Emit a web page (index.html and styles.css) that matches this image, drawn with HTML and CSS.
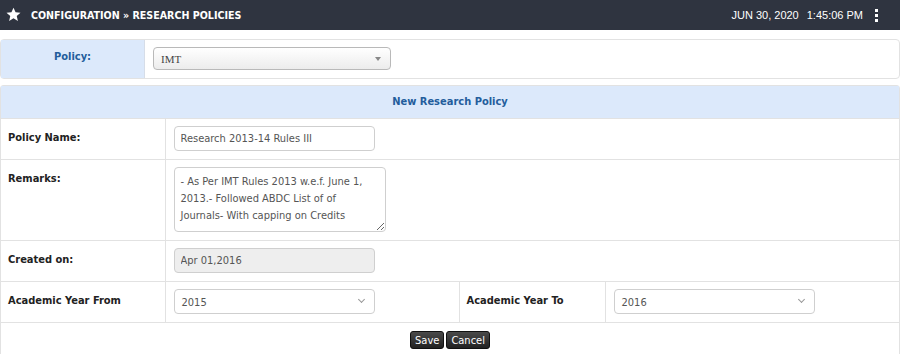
FILE: index.html
```html
<!DOCTYPE html>
<html lang="en">
<head>
    <meta charset="UTF-8">
    <title>Configuration - Research Policies</title>
    <link rel="stylesheet" href="styles.css">
</head>
<body>
    <header class="topbar">
        <div class="crumbs">
            <svg class="star" viewBox="0 0 24 24" width="15" height="15"><path d="M12 1l3.3 7.3 7.9.8-6 5.3 1.8 7.8L12 18.1l-7 4.1 1.8-7.8-6-5.3 7.9-.8z" fill="#fff"/></svg>
            <span class="title">CONFIGURATION &raquo; RESEARCH POLICIES</span>
        </div>
        <div class="clock">
            <span>JUN 30, 2020</span>
            <span>1:45:06 PM</span>
            <span class="kebab"><i></i><i></i><i></i></span>
        </div>
    </header>

    <div class="policy-bar">
        <div class="policy-label">Policy:</div>
        <div class="policy-field">
            <div class="fake-select">IMT<span class="tri"></span></div>
        </div>
    </div>

    <section class="panel">
        <div class="panel-head">New Research Policy</div>
        <table class="form">
            <colgroup>
                <col class="c1"><col class="c2"><col class="c3"><col class="c4">
            </colgroup>
            <tr>
                <th>Policy Name:</th>
                <td colspan="3"><input class="text" type="text" value="Research 2013-14 Rules III"></td>
            </tr>
            <tr>
                <th>Remarks:</th>
                <td colspan="3"><textarea class="remarks">- As Per IMT Rules 2013 w.e.f. June 1, 2013.- Followed ABDC List of of Journals- With capping on Credits</textarea></td>
            </tr>
            <tr>
                <th>Created on:</th>
                <td colspan="3"><input class="text readonly" type="text" value="Apr 01,2016" readonly></td>
            </tr>
            <tr>
                <th>Academic Year From</th>
                <td><div class="year-select">2015<span class="chev"></span></div></td>
                <th class="second">Academic Year To</th>
                <td><div class="year-select">2016<span class="chev"></span></div></td>
            </tr>
            <tr>
                <td colspan="4" class="actions">
                    <button>Save</button><button>Cancel</button>
                </td>
            </tr>
        </table>
    </section>
</body>
</html>
```

FILE: styles.css
```css
body {
    margin: 0;
    font-family: 'DejaVu Sans Condensed', 'DejaVu Sans', sans-serif;
    font-size: 11px;
    color: #333;
    background: #fff;
}

.topbar {
    height: 30px;
    background: #2f3440;
    display: flex;
    justify-content: space-between;
    align-items: center;
    padding: 0 22px 0 6px;
    color: #fff;
}

.crumbs {
    display: flex;
    align-items: center;
}

.star {
    margin-right: 10px;
    margin-top: -2px;
}

.title {
    font-weight: bold;
    font-size: 10.6px;
}

.clock {
    display: flex;
    align-items: center;
    gap: 8px;
    font-family: 'Liberation Sans', Arial, sans-serif;
    font-size: 11px;
}

.kebab {
    display: flex;
    flex-direction: column;
    gap: 2px;
    margin-left: 4px;
}

.kebab i {
    width: 3px;
    height: 3px;
    background: #fff;
}

.policy-bar {
    margin: 9px 0 0;
    height: 38px;
    border: 1px solid #e2e2e2;
    border-radius: 4px;
    display: flex;
}

.policy-label {
    width: 144px;
    background: #dce9fb;
    border-right: 1px solid #d6dde8;
    color: #235d9c;
    font-weight: bold;
    text-align: center;
    padding-top: 10px;
    box-sizing: border-box;
}

.policy-field {
    padding: 7px 8px;
}

.fake-select {
    width: 238px;
    height: 23px;
    box-sizing: border-box;
    border: 1px solid #b9b9b9;
    border-radius: 4px;
    background: linear-gradient(#ffffff, #ececec);
    font-family: 'Liberation Serif', serif;
    font-size: 11px;
    color: #444;
    padding: 5px 7px;
    position: relative;
}

.tri {
    position: absolute;
    right: 9px;
    top: 9px;
    border-left: 3px solid transparent;
    border-right: 3px solid transparent;
    border-top: 4px solid #888;
}

.panel {
    margin-top: 6px;
    border: 1px solid #e2e2e2;
    border-bottom: 0;
    border-radius: 4px 4px 0 0;
}

.panel-head {
    height: 32px;
    line-height: 32px;
    background: #dce9fb;
    color: #235d9c;
    font-weight: bold;
    text-align: center;
}

.form {
    width: 100%;
    border-collapse: collapse;
}

.form .c1 { width: 164px; }
.form .c2 { width: 294px; }
.form .c3 { width: 146px; }

.form th,
.form td {
    border-top: 1px solid #e2e2e2;
    vertical-align: top;
    text-align: left;
    padding: 7px 8px 8px;
}

.form th {
    padding-top: 12px;
    padding-left: 7px;
    border-right: 1px solid #e2e2e2;
    font-weight: bold;
    color: #222;
}

.form th.second {
    border-left: 1px solid #e2e2e2;
}

.text {
    display: block;
    width: 201px;
    height: 25px;
    box-sizing: border-box;
    border: 1px solid #cfcfcf;
    border-radius: 4px;
    padding: 0 6px;
    font: 11px 'DejaVu Sans Condensed', 'DejaVu Sans', sans-serif;
    color: #555;
}

.readonly {
    background: #eeeeee;
}

.remarks {
    display: block;
    width: 212px;
    height: 65px;
    box-sizing: border-box;
    border: 1px solid #cfcfcf;
    border-radius: 4px;
    padding: 5px 6px;
    font: 11px/17px 'DejaVu Sans Condensed', 'DejaVu Sans', sans-serif;
    color: #555;
    resize: vertical;
}

.year-select {
    width: 201px;
    height: 25px;
    box-sizing: border-box;
    border: 1px solid #cfcfcf;
    border-radius: 4px;
    padding: 6px 7px;
    color: #555;
    position: relative;
}

.chev {
    position: absolute;
    right: 10px;
    top: 7px;
    width: 4px;
    height: 4px;
    border-right: 1px solid #999;
    border-bottom: 1px solid #999;
    transform: rotate(45deg);
}

.form td.actions {
    text-align: center;
    padding: 8px 0 6px;
}

.actions button {
    font: 11px 'DejaVu Sans Condensed', 'DejaVu Sans', sans-serif;
    color: #fff;
    background: linear-gradient(#4a4a4a, #222);
    border: 1px solid #111;
    border-radius: 3px;
    padding: 1px 4px;
    margin: 0 1px;
    height: 18px;
}
```
